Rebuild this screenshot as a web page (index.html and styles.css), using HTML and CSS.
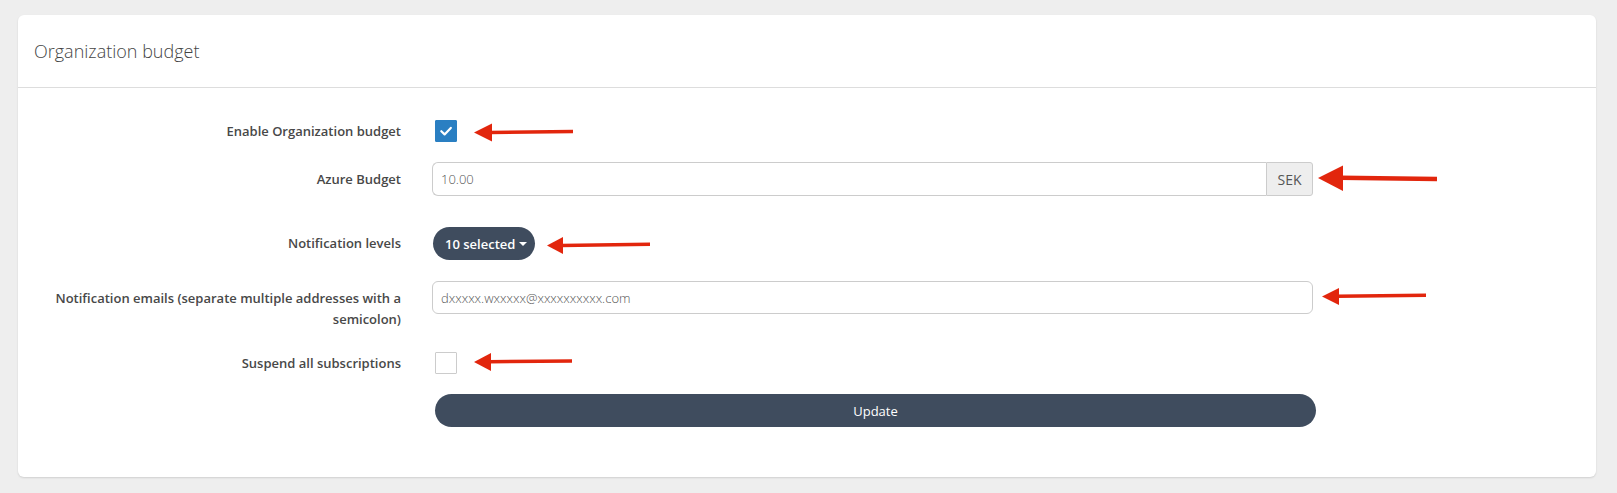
FILE: index.html
```html
<!DOCTYPE html>
<html lang="en">
<head>
<meta charset="utf-8">
<title>Organization budget</title>
<link rel="stylesheet" href="styles.css">
</head>
<body>
<div class="page">
  <section class="card">
    <header class="card-head">
      <h2 class="card-title">Organization budget</h2>
    </header>
    <div class="card-body">
      <form class="form">
        <div class="row row-center">
          <label class="lbl">Enable Organization budget</label>
          <div class="ctl">
            <span class="check is-checked">
              <svg viewBox="0 0 22 22" width="22" height="22"><path d="M6.3 11.2 L9.6 14.4 L15.8 7.9" fill="none" stroke="#fff" stroke-width="2.2" stroke-linecap="round" stroke-linejoin="round"/></svg>
            </span>
          </div>
        </div>
        <div class="row row-center">
          <label class="lbl">Azure Budget</label>
          <div class="ctl">
            <div class="input-group">
              <input class="input input-left" type="text" value="10.00">
              <span class="addon">SEK</span>
            </div>
          </div>
        </div>
        <div class="row row-center row-levels">
          <label class="lbl">Notification levels</label>
          <div class="ctl">
            <button type="button" class="pill">10 selected <span class="caret"></span></button>
          </div>
        </div>
        <div class="row row-top row-emails">
          <label class="lbl lbl-multi">Notification emails (separate multiple addresses with a semicolon)</label>
          <div class="ctl">
            <input class="input input-full" type="text" value="dxxxxx.wxxxxx@xxxxxxxxxx.com">
          </div>
        </div>
        <div class="row row-center row-suspend">
          <label class="lbl">Suspend all subscriptions</label>
          <div class="ctl">
            <span class="check"></span>
          </div>
        </div>
        <div class="row row-center">
          <span class="lbl"></span>
          <div class="ctl">
            <button type="button" class="btn-update">Update</button>
          </div>
        </div>
      </form>
    </div>
  </section>

  <svg class="annotations" width="1617" height="493" viewBox="0 0 1617 493">
    <g fill="#e2260d" stroke="#e2260d" stroke-linecap="butt">
      <line x1="490" y1="132.5" x2="573" y2="131.5" stroke-width="3.5"/>
      <polygon points="474,132.5 492,123.5 492,141.5" stroke="none"/>

      <line x1="1340" y1="177.8" x2="1437" y2="179" stroke-width="4.5"/>
      <polygon points="1318,178 1343,165.5 1343,191" stroke="none"/>

      <line x1="561" y1="245.5" x2="650" y2="244.2" stroke-width="3.5"/>
      <polygon points="547,245.5 563,237 563,254" stroke="none"/>

      <line x1="1337" y1="296.3" x2="1426" y2="295.2" stroke-width="3.5"/>
      <polygon points="1322,296.5 1339,288 1339,305" stroke="none"/>

      <line x1="489" y1="361.8" x2="572" y2="361" stroke-width="3.5"/>
      <polygon points="474,362 491,353 491,371" stroke="none"/>
    </g>
  </svg>
</div>
</body>
</html>
```

FILE: styles.css
```css
* {
  box-sizing: border-box;
}

html, body {
  margin: 0;
  padding: 0;
}

body {
  background: #eeeeee;
  font-family: "Open Sans", "Noto Sans", "Liberation Sans", sans-serif;
  color: #484848;
  width: 1617px;
  height: 493px;
  overflow: hidden;
}

.page {
  position: relative;
  width: 1617px;
  height: 493px;
  padding: 15px 21px 0 18px;
}

.card {
  background: #ffffff;
  border-radius: 6px;
  box-shadow: 0 1px 2px rgba(0, 0, 0, 0.13);
}

.card-head {
  height: 73px;
  border-bottom: 1px solid #dddddd;
  display: flex;
  align-items: center;
  padding-left: 16px;
}

.card-title {
  margin: 0;
  font-size: 18px;
  font-weight: 300;
  color: #444444;
  line-height: 24px;
}

.card-body {
  padding: 32px 0 50px 0;
}

.form {
  display: flex;
  flex-direction: column;
  gap: 20px;
  margin: 0;
}

.row {
  display: grid;
  grid-template-columns: 383px 884px;
  column-gap: 31px;
}

.row-center {
  align-items: center;
}

.row-top {
  align-items: start;
}

.row-levels {
  margin-top: 11px;
}

.row-emails {
  margin-top: 1px;
}

.row-suspend {
  margin-top: 2px;
}

.lbl {
  text-align: right;
  font-size: 13px;
  font-weight: 600;
  line-height: 21px;
  color: #484848;
}

.lbl-multi {
  padding-top: 7px;
}

.ctl {
  display: flex;
  align-items: center;
}

.check {
  display: block;
  flex-shrink: 0;
  width: 22px;
  height: 22px;
  margin-left: 3px;
  border: 1px solid #cccccc;
  border-radius: 1px;
  background: #ffffff;
}

.check.is-checked {
  background: #2a7fc2;
  border-color: #2a7fc2;
  display: flex;
  align-items: center;
  justify-content: center;
}

.check.is-checked svg {
  display: block;
  margin: -1px;
}

.input-group {
  display: flex;
  flex-shrink: 0;
  width: 881px;
  height: 34px;
}

.input {
  height: 34px;
  border: 1px solid #cccccc;
  padding: 0 8px;
  font-family: "Open Sans", "Noto Sans", "Liberation Sans", sans-serif;
  font-size: 13px;
  font-weight: 300;
  color: #555555;
  background: #ffffff;
  outline: none;
}

.input-left {
  flex: 1;
  min-width: 0;
  border-radius: 6px 0 0 6px;
  border-right: none;
}

.input-full {
  flex-shrink: 0;
  width: 881px;
  height: 33px;
  border-radius: 6px;
}

.addon {
  width: 47px;
  height: 34px;
  display: flex;
  align-items: center;
  justify-content: center;
  background: #eeeeee;
  border: 1px solid #cccccc;
  border-radius: 0 3px 3px 0;
  font-size: 14px;
  color: #555555;
}

.pill {
  flex-shrink: 0;
  height: 33px;
  width: 102px;
  margin-left: 1px;
  border: none;
  border-radius: 17px;
  background: #3f4c5e;
  color: #ffffff;
  font-family: "Open Sans", "Noto Sans", "Liberation Sans", sans-serif;
  font-size: 13px;
  font-weight: 600;
  padding: 0 0 0 12px;
  display: flex;
  align-items: center;
  gap: 4px;
}

.caret {
  display: inline-block;
  width: 0;
  height: 0;
  border-left: 4px solid transparent;
  border-right: 4px solid transparent;
  border-top: 4px solid #ffffff;
  margin-top: 1px;
}

.btn-update {
  flex-shrink: 0;
  width: 881px;
  height: 33px;
  margin-left: 3px;
  border: none;
  border-radius: 17px;
  background: #3f4c5e;
  color: #ffffff;
  font-family: "Open Sans", "Noto Sans", "Liberation Sans", sans-serif;
  font-size: 13px;
  font-weight: 400;
}

.annotations {
  position: absolute;
  top: 0;
  left: 0;
  pointer-events: none;
}
```
